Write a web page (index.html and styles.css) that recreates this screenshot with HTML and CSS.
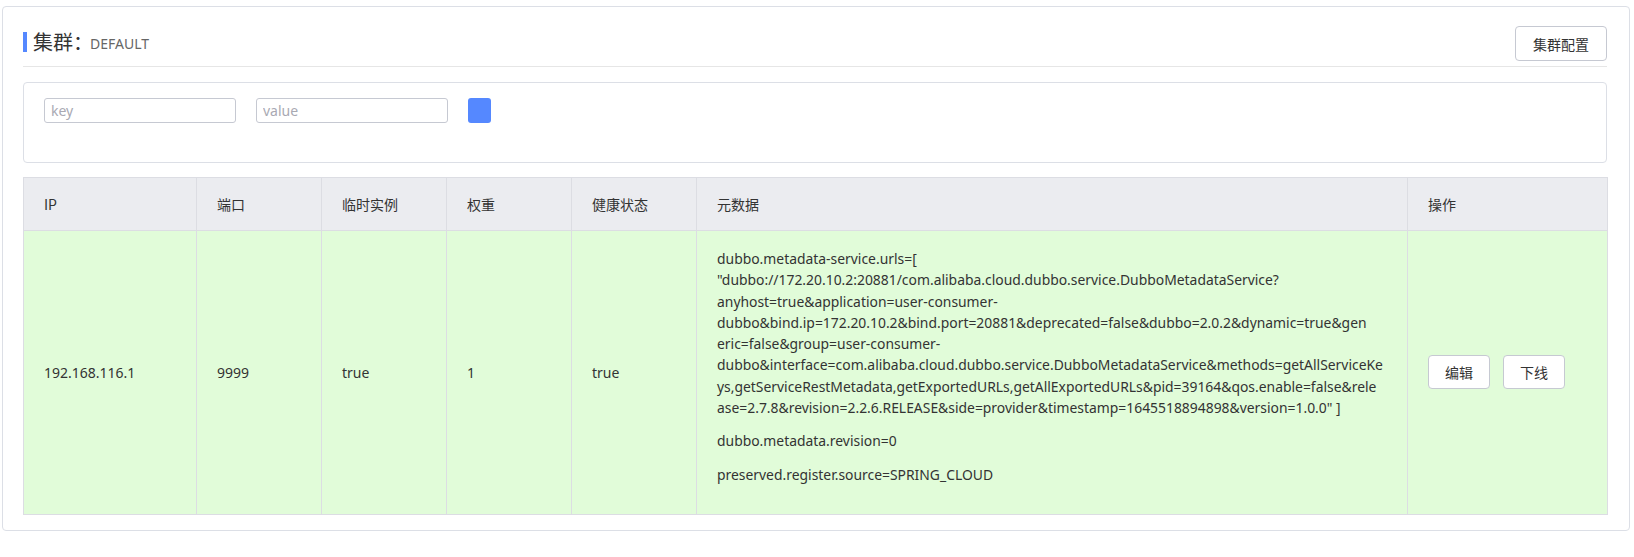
FILE: index.html
```html
<!DOCTYPE html>
<html lang="zh-CN">
<head>
<meta charset="utf-8">
<title>集群</title>
<link rel="stylesheet" href="styles.css">
</head>
<body>
<div class="card">
  <div class="card-head">
    <div class="title">
      <span class="title-bar"></span>
      <span class="title-main">集群：</span>
      <span class="title-sub">DEFAULT</span>
    </div>
    <button class="btn btn-cfg">集群配置</button>
  </div>

  <div class="filter">
    <input class="field" type="text" placeholder="key">
    <input class="field" type="text" placeholder="value">
    <button class="btn-search"></button>
  </div>

  <table class="grid">
    <colgroup>
      <col class="c-ip"><col class="c-port"><col class="c-eph"><col class="c-weight"><col class="c-health"><col class="c-meta"><col class="c-op">
    </colgroup>
    <thead>
      <tr>
        <th>IP</th><th>端口</th><th>临时实例</th><th>权重</th><th>健康状态</th><th>元数据</th><th>操作</th>
      </tr>
    </thead>
    <tbody>
      <tr>
        <td>192.168.116.1</td>
        <td>9999</td>
        <td>true</td>
        <td>1</td>
        <td>true</td>
        <td class="meta">
          <p>dubbo.metadata-service.urls=[<br>"dubbo://172.20.10.2:20881/com.alibaba.cloud.dubbo.service.DubboMetadataService?<br>anyhost=true&amp;application=user-consumer-<br>dubbo&amp;bind.ip=172.20.10.2&amp;bind.port=20881&amp;deprecated=false&amp;dubbo=2.0.2&amp;dynamic=true&amp;gen<br>eric=false&amp;group=user-consumer-<br>dubbo&amp;interface=com.alibaba.cloud.dubbo.service.DubboMetadataService&amp;methods=getAllServiceKe<br>ys,getServiceRestMetadata,getExportedURLs,getAllExportedURLs&amp;pid=39164&amp;qos.enable=false&amp;rele<br>ase=2.7.8&amp;revision=2.2.6.RELEASE&amp;side=provider&amp;timestamp=1645518894898&amp;version=1.0.0" ]</p>
          <p>dubbo.metadata.revision=0</p>
          <p>preserved.register.source=SPRING_CLOUD</p>
        </td>
        <td>
          <div class="ops">
            <button class="btn btn-sm">编辑</button>
            <button class="btn btn-sm">下线</button>
          </div>
        </td>
      </tr>
    </tbody>
  </table>
</div>
</body>
</html>
```

FILE: styles.css
```css
* { box-sizing: border-box; }

html, body {
  margin: 0;
  padding: 0;
  background: #fff;
  font-family: "Noto Sans", "Noto Sans CJK SC", sans-serif;
  font-size: 14px;
  color: #333;
}

.card {
  margin: 6px 4px 0 2px;
  border: 1px solid #dcdfe6;
  border-radius: 4px;
  padding: 0 22px 15px 20px;
}

.card-head {
  display: flex;
  align-items: center;
  justify-content: space-between;
  padding: 19px 0 5px;
  border-bottom: 1px solid #e6e6e6;
}

.title {
  display: flex;
  align-items: center;
  margin-top: -4px;
}

.title-bar {
  width: 4px;
  height: 20px;
  background: #5588ff;
  margin-right: 6px;
}

.title-main {
  font-size: 20px;
  color: #333;
  line-height: 24px;
  font-family: "Noto Sans CJK SC", sans-serif;
}

.title-sub {
  font-size: 14px;
  color: #666;
  margin-left: -3px;
  margin-top: 3px;
}

.btn {
  height: 35px;
  padding: 0 13px;
  border: 1px solid #c6c9d2;
  border-radius: 4px;
  background: #fff;
  font-family: "Noto Sans CJK SC", sans-serif;
  font-size: 14px;
  color: #333;
  cursor: pointer;
}

.btn-cfg {
  width: 92px;
  padding: 0;
}

.filter {
  margin-top: 15px;
  border: 1px solid #dcdfe6;
  border-radius: 4px;
  height: 81px;
  padding: 15px 20px 0;
  display: flex;
  align-items: flex-start;
  gap: 20px;
}

.field {
  width: 192px;
  height: 25px;
  border: 1px solid #c6c9d2;
  border-radius: 3px;
  padding: 0 6px;
  font-family: "Noto Sans", sans-serif;
  font-size: 14px;
  color: #333;
  outline: none;
}
.field::placeholder { color: #a9a9b3; }

.btn-search {
  width: 23px;
  height: 25px;
  border: none;
  border-radius: 3px;
  background: #5588ff;
  padding: 0;
}

.grid {
  margin-top: 14px;
  width: 100%;
  border-collapse: collapse;
  table-layout: fixed;
}

.c-ip { width: 173px; }
.c-port, .c-eph, .c-weight, .c-health { width: 125px; }
.c-meta { width: 711px; }
.c-op { width: 200px; }

.grid th, .grid td {
  border: 1px solid #dcdde3;
  padding: 0 20px;
  text-align: left;
  vertical-align: middle;
  font-weight: normal;
  font-size: 14px;
  color: #333;
}

.grid th {
  background: #ebecf0;
  height: 53px;
  font-family: "Noto Sans CJK SC", sans-serif;
}

.grid td {
  background: #e1fcd9;
}

.grid td.meta {
  padding: 17px 19px 17px 20px;
  white-space: nowrap;
  font-size: 13.9px;
}

.meta p {
  margin: 0 0 12px;
  line-height: 21.3px;
}

.ops {
  display: flex;
  gap: 13px;
}

.btn-sm {
  width: 62px;
  height: 34px;
  padding: 0;
}
```
